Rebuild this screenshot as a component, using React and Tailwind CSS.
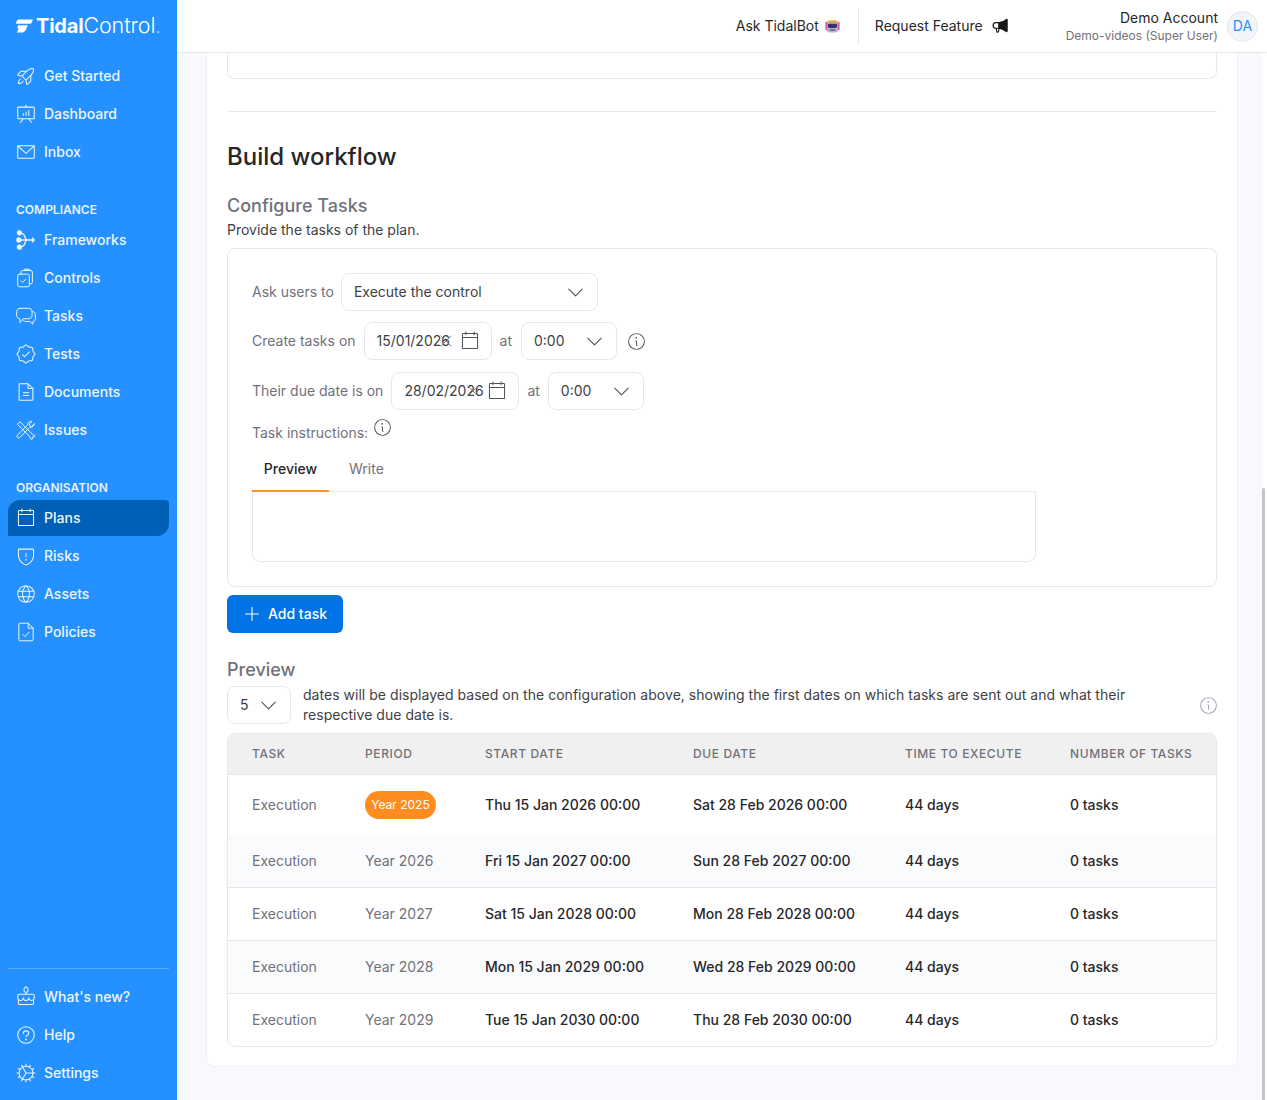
import React from 'react';
import { ChevronDown, Plus, X } from 'lucide-react';
import { PiRocketLaunchLight, PiPresentationChartLight, PiEnvelopeSimpleLight, PiSealCheckLight, PiFileTextLight, PiCalendarBlankLight, PiShieldWarningLight, PiGlobeLight, PiCakeLight, PiQuestionLight, PiGearFineLight, PiMegaphoneFill, PiInfoLight } from 'react-icons/pi';

const FrameworksIcon = ({ className }) => (
    <svg viewBox="0 0 20 20" fill="none" stroke="currentColor" strokeWidth="1.2" className={className}>
        <circle cx="4" cy="3.500" r="1.800" fill="currentColor" />
        <circle cx="3.500" cy="10" r="1.800" fill="currentColor" />
        <circle cx="4" cy="16.500" r="1.800" fill="currentColor" />
        <path d="M5.500 3.800c3 .3 3.500 3 4 4.600.3 1 .8 1.600 2 1.600M5.500 16.200c3-.3 3.500-3 4-4.600.3-1 .8-1.600 2-1.600M5 10h12.500M15.500 8l2 2-2 2" />
    </svg>
);

const ControlsIcon = ({ className }) => (
    <svg viewBox="0 0 20 20" fill="none" stroke="currentColor" strokeWidth="0.9" strokeLinejoin="round" strokeLinecap="round" className={className}>
        <rect x="2.500" y="6.500" width="10.500" height="11.500" rx="1.500" />
        <path d="M5.500 12.500l1.500 1.500 2.800-3" />
        <path d="M5.500 6.500V4.500c0-.8.600-1.300 1.300-1.300h7.700c.8 0 1.300.6 1.300 1.300v9.500c0 .8-.6 1.300-1.300 1.300H13" />
        <path d="M8.500 3.200V2h4.500v1.200" />
    </svg>
);

const TasksIcon = ({ className }) => (
    <svg viewBox="0 0 20 20" fill="none" stroke="currentColor" strokeWidth="0.9" strokeLinejoin="round" strokeLinecap="round" className={className}>
        <path d="M4.500 3h8c1.700 0 3 1.300 3 3v3.500c0 1.700-1.300 3-3 3H7.500l-3 3.500v-3.500c-1.800-.1-3-1.300-3-3V6c0-1.700 1.300-3 3-3z" />
        <path d="M15.500 6h.5c1.400 0 2.500 1.100 2.500 2.500v4c0 1.400-1 2.400-2.300 2.500v2.500l-2.700-2.500H9.500c-1 0-1.800-.5-2.200-1.300" />
    </svg>
);

const IssuesIcon = ({ className }) => (
    <svg viewBox="0 0 20 20" fill="none" stroke="currentColor" strokeWidth="0.9" strokeLinejoin="round" strokeLinecap="round" className={className}>
        <path d="M2.500 4.500l2-2 11.500 11.500c1.200-.3 2.200.9 1.800 2.100l-2 .2-.2 2c-1.200.4-2.400-.6-2.100-1.800z" />
        <path d="M17.500 4.500l-2.300 2.200-1.800-.3-.3-1.800 2.200-2.300c-1.800-.6-4.200.8-4 3.300l-9 8.900c-.8.800-.6 1.600 0 2.200s1.400.8 2.200 0l8.900-9c2.500.2 3.900-1.500 4.100-3.200z" />
    </svg>
);

const PoliciesIcon = ({ className }) => (
    <svg viewBox="0 0 20 20" fill="none" stroke="currentColor" strokeWidth="0.9" strokeLinejoin="round" strokeLinecap="round" className={className}>
        <path d="M3.500 3c0-.6.500-1 1-1h7.500l4.500 4.500V17c0 .6-.5 1-1 1h-11c-.6 0-1-.5-1-1z" />
        <path d="M12 2v4.500h4.500M7 12l2.200 2.200 3.600-4" />
    </svg>
);

const BotIcon = () => (
    <svg viewBox="0 0 16 16" className="w-[15px] h-[15px]">
        <rect x="0.500" y="3" width="2" height="9" rx="1" fill="#d946a8" />
        <rect x="13.500" y="3" width="2" height="9" rx="1" fill="#d946a8" />
        <rect x="2" y="1.500" width="12" height="13" rx="3.500" fill="#b9aecb" />
        <rect x="3" y="1.500" width="10" height="3" rx="1.500" fill="#e4a94f" />
        <rect x="3" y="5" width="10" height="4.500" rx="1.500" fill="#33346b" />
        <rect x="5" y="11" width="6" height="1.500" rx="0.700" fill="#6c5f8a" />
    </svg>
);

const Logo = () => (
    <div className="flex items-center h-[58px] pl-[16px] pb-[8px] pt-[2px]">
        <svg viewBox="0 0 18 14" className="w-[17px] h-[14px] mr-[3px]" fill="white">
            <path d="M3 0h15l-1.500 3.500c-.3.700-1 1.200-1.800 1.200H0C.3 2 1.200 0 3 0z" />
            <path d="M2 6.300h10.500l-1.700 3.800C10 12.200 8.500 14 5.500 14H1l1.800-4.500H1.500z" />
        </svg>
        <span className="text-[20px] leading-none font-bold text-white tracking-[-0.2px]">Tidal</span>
        <span className="text-[21.500px] leading-none font-light text-white tracking-[-0.1px]">Control</span>
        <span className="text-[20px] leading-none font-light text-white/60">.</span>
    </div>
);

const NavItem = ({ icon: Icon, label, active }) => (
    <a href="#" className={`flex items-center h-9 mx-2 pl-[9px] gap-[9px] text-sm font-medium text-[#eef6ff] ${active ? 'bg-[#0060b5] rounded-tl-[12px] rounded-br-[12px] rounded-tr-[4px]' : ''}`}>
        <Icon className="w-[22px] h-[22px] -mx-[2px] shrink-0" />
        <span>{label}</span>
    </a>
);

const NavLabel = ({ children }) => (
    <div className="mt-8 mb-1 pl-4 h-4 text-xs leading-4 font-semibold text-[#e6f2ff]">{children}</div>
);

const Sidebar = () => (
    <aside className="w-[177px] shrink-0 bg-[#2590ff] flex flex-col">
        <Logo />
        <nav className="flex flex-col gap-0.5">
            <NavItem icon={PiRocketLaunchLight} label="Get Started" />
            <NavItem icon={PiPresentationChartLight} label="Dashboard" />
            <NavItem icon={PiEnvelopeSimpleLight} label="Inbox" />
        </nav>
        <NavLabel>COMPLIANCE</NavLabel>
        <nav className="flex flex-col gap-0.5">
            <NavItem icon={FrameworksIcon} label="Frameworks" />
            <NavItem icon={ControlsIcon} label="Controls" />
            <NavItem icon={TasksIcon} label="Tasks" />
            <NavItem icon={PiSealCheckLight} label="Tests" />
            <NavItem icon={PiFileTextLight} label="Documents" />
            <NavItem icon={IssuesIcon} label="Issues" />
        </nav>
        <NavLabel>ORGANISATION</NavLabel>
        <nav className="flex flex-col gap-0.5">
            <NavItem icon={PiCalendarBlankLight} label="Plans" active />
            <NavItem icon={PiShieldWarningLight} label="Risks" />
            <NavItem icon={PiGlobeLight} label="Assets" />
            <NavItem icon={PoliciesIcon} label="Policies" />
        </nav>
        <div className="mt-auto mx-2 border-t border-[#5aaaff]"></div>
        <nav className="pt-2.5 pb-[9px] flex flex-col gap-0.5">
            <NavItem icon={PiCakeLight} label="What's new?" />
            <NavItem icon={PiQuestionLight} label="Help" />
            <NavItem icon={PiGearFineLight} label="Settings" />
        </nav>
    </aside>
);

const Header = () => (
    <header className="h-[53px] shrink-0 bg-white border-b border-[#e5e7eb] flex items-center justify-end pr-[9px]">
        <div className="flex items-center gap-[6px] text-sm text-[#27272a] pr-[18px] h-9 border-r border-[#e5e7eb] mr-4">
            <span>Ask TidalBot</span>
            <BotIcon />
        </div>
        <div className="flex items-center gap-[9px] text-sm text-[#27272a] mr-[56px]">
            <span>Request Feature</span>
            <PiMegaphoneFill className="w-[18px] h-[18px] text-[#18181b] -scale-x-100" />
        </div>
        <div className="text-right mr-[9px] pt-[2px]">
            <div className="text-sm leading-[18px] text-[#27272a]">Demo Account</div>
            <div className="text-xs leading-[18px] text-[#71717a]">Demo-videos (Super User)</div>
        </div>
        <div className="w-[31px] h-[31px] rounded-full bg-[#f1f5f9] border border-[#e5e7eb] flex items-center justify-center text-sm text-[#2590ff]">DA</div>
    </header>
);

const Select = ({ value, className }) => (
    <div className={`h-[38px] shrink-0 border border-[#e8e8ea] rounded-lg flex items-center justify-between pl-3 pr-[8px] text-sm text-[#3f3f46] ${className}`}>
        <span>{value}</span>
        <ChevronDown strokeWidth={1} className="w-[27px] h-[27px] text-[#52525b]" />
    </div>
);

const DateField = ({ value }) => (
    <div className="relative w-[128px] h-[38px] shrink-0 border border-[#e8e8ea] rounded-lg flex items-center justify-between pl-3 pr-3 text-sm text-[#3f3f46]">
        <span>{value}</span>
        <X strokeWidth={1.100} className="absolute left-[71px] top-[8px] w-5 h-5 text-[#71717a]" />
        <PiCalendarBlankLight className="w-[22px] h-[22px] -mr-[2px] text-[#52525b]" />
    </div>
);

const Info = ({ className }) => <PiInfoLight className={`w-[21px] h-[21px] -mx-[1px] shrink-0 text-[#52525b] ${className}`} />;

const rows = [
    { period: 'Year 2025', start: 'Thu 15 Jan 2026 00:00', due: 'Sat 28 Feb 2026 00:00', h: 'h-[60px]', badge: true },
    { period: 'Year 2026', start: 'Fri 15 Jan 2027 00:00', due: 'Sun 28 Feb 2027 00:00', h: 'h-[53px] bg-[#fafbfd] border-b border-[#e5e7eb]' },
    { period: 'Year 2027', start: 'Sat 15 Jan 2028 00:00', due: 'Mon 28 Feb 2028 00:00', h: 'h-[53px] border-b border-[#e5e7eb]' },
    { period: 'Year 2028', start: 'Mon 15 Jan 2029 00:00', due: 'Wed 28 Feb 2029 00:00', h: 'h-[53px] bg-[#fafbfd] border-b border-[#e5e7eb]' },
    { period: 'Year 2029', start: 'Tue 15 Jan 2030 00:00', due: 'Thu 28 Feb 2030 00:00', h: 'h-[52px]' },
];

const cols = 'grid grid-cols-[113px_120px_208px_212px_165px_1fr] items-center pl-6';

const PreviewTable = () => (
    <div className="border border-[#e8e8ea] rounded-lg overflow-hidden">
        <div className={`${cols} h-[41px] bg-[#f0f0f0] border-b border-[#e5e7eb] text-xs font-medium tracking-wider text-[#71717a]`}>
            <span>TASK</span>
            <span>PERIOD</span>
            <span>START DATE</span>
            <span>DUE DATE</span>
            <span>TIME TO EXECUTE</span>
            <span>NUMBER OF TASKS</span>
        </div>
        {rows.map(row => (
            <div key={row.period} className={`${cols} ${row.h} text-sm text-[#27272a]`}>
                <span className="text-[#71717a]">Execution</span>
                {row.badge ? (
                    <span className="w-[71px] h-7 rounded-full bg-[#ff8c1f] text-white text-xs flex items-center justify-center">{row.period}</span>
                ) : (
                    <span className="text-[#71717a]">{row.period}</span>
                )}
                <span className="font-medium">{row.start}</span>
                <span className="font-medium">{row.due}</span>
                <span className="font-medium">44 days</span>
                <span className="font-medium">0 tasks</span>
            </div>
        ))}
    </div>
);

const Workflow = () => (
    <div className="bg-white border border-[#f0f0f3] border-t-0 rounded-b-lg px-5 pb-[19px]">
        <div className="h-[26px] border border-t-0 border-[#e8e8ea] rounded-b-lg"></div>
        <div className="mt-8 border-t border-[#e5e7eb]"></div>
        <h2 className="mt-[29px] text-2xl leading-8 font-medium text-[#27272a]">Build workflow</h2>
        <h3 className="mt-[21px] text-lg leading-6 font-medium text-[#71717a]">Configure Tasks</h3>
        <p className="mt-[2px] text-sm leading-5 text-[#3f3f46]">Provide the tasks of the plan.</p>

        <div className="mt-2 h-[339px] border border-[#e8e8ea] rounded-lg pt-6 pl-6">
            <div className="flex items-center gap-[7px] text-sm text-[#71717a]">
                <span>Ask users to</span>
                <Select value="Execute the control" className="w-[257px]" />
            </div>
            <div className="mt-[11px] flex items-center gap-2 text-sm text-[#71717a]">
                <span>Create tasks on</span>
                <DateField value="15/01/2026" />
                <span>at</span>
                <Select value="0:00" className="w-[96px] ml-[1px]" />
                <Info className="ml-[1px]" />
            </div>
            <div className="mt-3 flex items-center gap-2 text-sm text-[#71717a]">
                <span>Their due date is on</span>
                <DateField value="28/02/2026" />
                <span>at</span>
                <Select value="0:00" className="w-[96px]" />
            </div>
            <div className="mt-[7px] flex items-start gap-[5px] text-sm text-[#71717a] h-5">
                <span className="mt-[6px]">Task instructions:</span>
                <Info />
            </div>
            <div className="mt-[18px] w-[784px] flex border-b border-[#e5e7eb] text-sm h-[37px]">
                <div className="w-[77px] h-[37px] border-b-2 border-[#f7942d] text-center leading-[28px] font-medium text-[#27272a]">Preview</div>
                <div className="ml-5 leading-[28px] text-[#71717a]">Write</div>
            </div>
            <div className="w-[784px] h-[70px] border border-t-0 border-[#e8e8ea] rounded-b-lg"></div>
        </div>

        <button className="mt-2 w-[116px] h-[38px] rounded-md bg-[#0073e6] text-white text-sm font-medium flex items-center pl-[14px] gap-[5px]">
            <Plus strokeWidth={1.200} className="w-[22px] h-[22px]" />
            Add task
        </button>

        <h3 className="mt-[25px] text-lg leading-6 font-medium text-[#71717a]">Preview</h3>
        <div className="mt-[4px] flex items-center gap-3 h-[38px]">
            <Select value="5" className="w-[64px] !pr-[8px]" />
            <p className="w-[860px] text-sm leading-5 tracking-[0.03px] text-[#3f3f46]">dates will be displayed based on the configuration above, showing the first dates on which tasks are sent out and what their respective due date is.</p>
            <Info className="ml-auto -mr-[2px] !text-[#9ca3af]" />
        </div>
        <div className="mt-[9px]">
            <PreviewTable />
        </div>
    </div>
);

export default function App() {
    return (
        <div className="relative h-[1100px] flex overflow-hidden bg-[#f8f9fc] font-['Inter',sans-serif]">
            <Sidebar />
            <main className="flex-1 min-w-0 flex flex-col">
                <Header />
                <div className="pl-[29px] pr-[29px]">
                    <Workflow />
                </div>
            </main>
            <div className="absolute right-0 top-[53px] bottom-0 w-[5px] bg-white">
                <div className="mt-[435px] ml-0 w-[3px] h-[612px] bg-[#c4c4c6] rounded-t-full"></div>
            </div>
        </div>
    );
}
